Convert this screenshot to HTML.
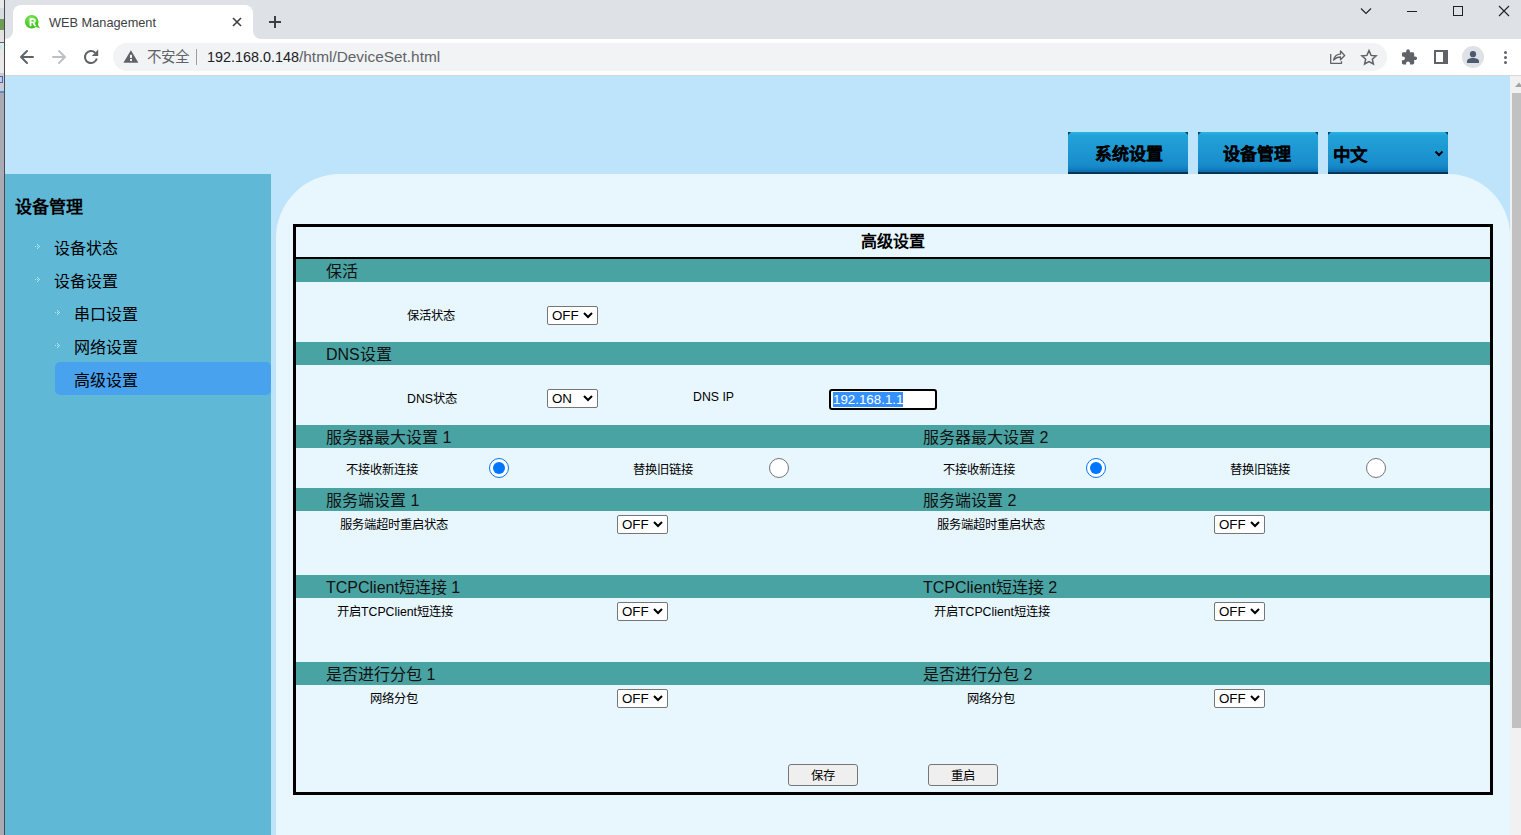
<!DOCTYPE html>
<html lang="zh-CN">
<head>
<meta charset="utf-8">
<style>
*{margin:0;padding:0;box-sizing:border-box;}
html,body{width:1521px;height:835px;overflow:hidden;background:#fff;}
body{position:relative;font-family:"Liberation Sans",sans-serif;color:#000;}
.a{position:absolute;}
.t{position:absolute;white-space:nowrap;line-height:1;}
/* browser chrome */
#tabbar{left:5px;top:0;width:1516px;height:39px;background:#dee1e6;}
#tab{left:13px;top:5px;width:240px;height:34px;background:#fff;border-radius:8px 8px 0 0;}
#toolbar{left:5px;top:39px;width:1516px;height:36px;background:#fff;}
#tbline{left:5px;top:75px;width:1516px;height:1px;background:#d8d7d7;}
#omni{left:113px;top:43px;width:1274px;height:28px;background:#f1f3f4;border-radius:14px;}
/* page */
#page{left:5px;top:76px;width:1505px;height:759px;background:#bde4fb;}
#side{left:5px;top:174px;width:266px;height:661px;background:#60b8d7;}
#panel{left:276px;top:174px;width:1234px;height:661px;background:#e8f7fe;border-radius:64px 62px 0 0;}
.navbtn{position:absolute;top:132px;width:120px;height:42px;border-radius:0;
 background:linear-gradient(#28b6e1 0px,#22a3d8 3px,#1d96d1 20px,#188ccb 33px,#1383c4 36px,#0c6eb3 39.5px,#093d62 40px,#073556 41px,#06304f 42px);
 font-weight:bold;font-size:17px;-webkit-text-stroke:0.15px #000;}
.navbtn::before,.navbtn::after{content:"";position:absolute;top:0;width:0;height:0;border-top:3px solid #0b3c5e;}
.navbtn::before{left:0;border-right:3px solid transparent;}
.navbtn::after{right:0;border-left:3px solid transparent;}
.sel{position:absolute;width:51px;height:19px;background:#fff;border:1px solid #767676;border-radius:2px;font-size:13.33px;}
.sel span{position:absolute;left:4px;top:2px;line-height:1;}
.sel svg{position:absolute;left:35px;top:5px;}
.hdr{position:absolute;left:296px;width:1194px;height:23px;background:#4aa3a3;}
.ht{position:absolute;margin-top:2px;font-size:16px;line-height:1;white-space:nowrap;color:#111;}
.lbl{position:absolute;margin-top:2px;font-size:12.3px;line-height:1;white-space:nowrap;}
.radio{position:absolute;width:20px;height:20px;border-radius:50%;}
.radio.on{border:1.3px solid #0075ff;background:#fff;}
.radio.on::after{content:"";position:absolute;left:2.7px;top:2.7px;width:12px;height:12px;border-radius:50%;background:#0075ff;}
.radio.off{border:1px solid #767676;background:#fff;}
.btn{position:absolute;top:764px;width:70px;height:22px;background:#efefef;border:1px solid #767676;border-radius:3px;font-size:12.3px;text-align:center;}
.btn span{position:relative;top:4px;line-height:1;}
.nav{position:absolute;margin-top:2px;font-size:16px;line-height:1;white-space:nowrap;}
.bul{position:absolute;}
</style>
</head>
<body>
<!-- left other window strip -->
<div class="a" style="left:0;top:0;width:4px;height:835px;background:#a9aab4"></div>
<div class="a" style="left:0;top:0;width:4px;height:8px;background:#e9e9ea"></div>
<div class="a" style="left:0;top:8px;width:4px;height:11px;background:#d6dce3"></div>
<div class="a" style="left:0;top:19px;width:4px;height:11px;background:#6f9b52"></div>
<div class="a" style="left:0;top:30px;width:4px;height:12px;background:#e3e3e3"></div>
<div class="a" style="left:0;top:42px;width:4px;height:1px;background:#606060"></div>
<div class="a" style="left:0;top:43px;width:4px;height:30px;background:#e8e8e8"></div>
<div class="a" style="left:0;top:45px;width:2px;height:4px;background:#b8eef0"></div>
<div class="a" style="left:0;top:73px;width:4px;height:19px;background:#c8ccd8"></div>
<div class="a" style="left:0;top:76px;width:3px;height:7px;border:1px solid #4a66b0;border-left:none"></div>
<div class="a" style="left:0;top:91px;width:4px;height:2px;background:#5b8ed0"></div>
<div class="a" style="left:4px;top:0;width:1px;height:835px;background:#4a4a4a"></div>
<div id="tabbar" class="a"></div>
<div id="tab" class="a"></div>
<div id="toolbar" class="a"></div>
<div id="tbline" class="a"></div>
<div id="omni" class="a"></div>


<!-- tab flares -->
<div class="a" style="left:5px;top:31px;width:8px;height:8px;background:#fff"></div>
<div class="a" style="left:5px;top:31px;width:8px;height:8px;background:#dee1e6;border-bottom-right-radius:8px"></div>
<div class="a" style="left:253px;top:31px;width:8px;height:8px;background:#fff"></div>
<div class="a" style="left:253px;top:31px;width:8px;height:8px;background:#dee1e6;border-bottom-left-radius:8px"></div>
<!-- favicon -->
<svg class="a" style="left:0;top:0" width="45" height="35" viewBox="0 0 45 35">
 <defs><radialGradient id="fg" cx="0.45" cy="0.3" r="0.75"><stop offset="0" stop-color="#8ee86a"/><stop offset="0.6" stop-color="#4fd02a"/><stop offset="1" stop-color="#38b818"/></radialGradient></defs>
 <circle cx="31.7" cy="21.8" r="6.8" fill="url(#fg)"/>
 <path d="M34.5 26.5L40 28.3L37.5 24Z" fill="#45c822"/>
 <path fill-rule="evenodd" fill="#fff" d="M29.6 18.3H33C35 18.3 35.9 19.3 35.9 20.6C35.9 21.7 35.2 22.4 34.3 22.7L36.3 26.3H34.3L32.6 23H31.4V26.3H29.6ZM31.4 19.7V21.7H32.9C33.6 21.7 34.1 21.4 34.1 20.7C34.1 20 33.6 19.7 32.9 19.7Z"/>
</svg>
<div class="t" style="left:49px;top:17px;font-size:12.75px;color:#3c4043">WEB Management</div>
<svg class="a" style="left:232px;top:17px" width="10" height="10" viewBox="0 0 10 10"><path d="M1 1L9 9M9 1L1 9" stroke="#3c4043" stroke-width="1.6"/></svg>
<svg class="a" style="left:268px;top:15px" width="14" height="14" viewBox="0 0 14 14"><path d="M7 1V13M1 7H13" stroke="#3c4043" stroke-width="2"/></svg>
<!-- window controls -->
<svg class="a" style="left:1360px;top:6px" width="12" height="10" viewBox="0 0 12 10"><path d="M1 2.5L6 7.5L11 2.5" fill="none" stroke="#202124" stroke-width="1.1"/></svg>
<div class="a" style="left:1407px;top:11px;width:10px;height:1px;background:#202124"></div>
<div class="a" style="left:1453px;top:6px;width:10px;height:10px;border:1px solid #202124"></div>
<svg class="a" style="left:1498px;top:5px" width="12" height="12" viewBox="0 0 12 12"><path d="M1 1L11 11M11 1L1 11" stroke="#202124" stroke-width="1.1"/></svg>
<!-- toolbar icons -->
<svg class="a" style="left:0;top:0" width="1521" height="76" viewBox="0 0 1521 76">
 <g fill="none" stroke-width="2" stroke-linecap="round" stroke-linejoin="round">
  <path d="M21 57H33M27 51L21 57L27 63" stroke="#5f6368"/>
  <path d="M53 57H65M59 51L65 57L59 63" stroke="#bdc1c6"/>
  <path d="M96.8 58.5A6 6 0 1 1 95.2 52.8" stroke="#5f6368" stroke-linecap="butt"/>
 </g>
 <path d="M91.8 55.9H98.2V49.5Z" fill="#5f6368"/>
 <path d="M130.9 50.2L138.4 62.8H123.4Z" fill="#5f6368"/>
 <rect x="130" y="54.8" width="2" height="3.2" fill="#f1f3f4"/>
 <rect x="130" y="59" width="2" height="2" fill="#f1f3f4"/>
 <!-- share -->
 <g fill="none" stroke="#5f6368" stroke-width="1.3" stroke-linejoin="round">
  <path d="M1330.7 54V63.3H1341.5V61.3"/>
  <path d="M1333.6 60C1334.5 56.5 1337 54.2 1340.5 54.2V51L1344.7 55.5L1340.5 59.8V57C1337.5 56.8 1335.5 58 1333.6 60Z"/>
 </g>
 <!-- star -->
 <path d="M1369 50.6L1371.1 55.4L1376.1 55.9L1372.3 59.2L1373.4 64L1369 61.5L1364.6 64L1365.7 59.2L1361.9 55.9L1366.9 55.4Z" fill="none" stroke="#5f6368" stroke-width="1.5" stroke-linejoin="miter"/>
 <!-- puzzle -->
 <g transform="translate(1400.5 48.6) scale(0.72)"><path d="M20.5 11H19V7c0-1.1-.9-2-2-2h-4V3.5C13 2.12 11.88 1 10.5 1S8 2.12 8 3.5V5H4c-1.1 0-1.99.9-1.99 2v3.8H3.5c1.49 0 2.7 1.21 2.7 2.7s-1.21 2.7-2.7 2.7H2V20c0 1.1.9 2 2 2h3.8v-1.5c0-1.49 1.21-2.7 2.7-2.7 1.49 0 2.7 1.21 2.7 2.7V22H17c1.1 0 2-.9 2-2v-4h1.5c1.38 0 2.5-1.12 2.5-2.5S21.88 11 20.5 11z" fill="#5f6368"/></g>
 <!-- side panel -->
 <rect x="1435" y="51" width="12" height="12" fill="none" stroke="#5f6368" stroke-width="2"/>
 <rect x="1443" y="50" width="5" height="14" fill="#5f6368"/>
 <!-- profile -->
 <circle cx="1473" cy="57" r="11" fill="#dee1e6"/>
 <circle cx="1473" cy="54.2" r="3.1" fill="#4e5a70"/>
 <path d="M1467 63V61.2C1467 59.2 1470 58 1473 58S1479 59.2 1479 61.2V63Z" fill="#4e5a70"/>
 <circle cx="1505.5" cy="52.4" r="1.5" fill="#5f6368"/>
 <circle cx="1505.5" cy="57.5" r="1.5" fill="#5f6368"/>
 <circle cx="1505.5" cy="62.5" r="1.5" fill="#5f6368"/>
</svg>
<div class="t" style="left:146.5px;top:50px;font-size:14.5px;color:#5f6368">不安全</div>
<div class="a" style="left:196px;top:49px;width:1px;height:16px;background:#9aa0a6"></div>
<div class="t" style="left:207px;top:49px;font-size:14.4px;color:#202124">192.168.0.148<span style="color:#5f6368;font-size:15.4px;position:relative;top:0">/html/DeviceSet.html</span></div>
<div id="page" class="a"></div>
<div id="side" class="a"></div>
<div id="panel" class="a"></div>


<!-- nav buttons -->
<div class="navbtn" style="left:1068px"><span class="t" style="left:27px;top:14px">系统设置</span></div>
<div class="navbtn" style="left:1198px"><span class="t" style="left:25px;top:14px">设备管理</span></div>
<div class="navbtn" style="left:1328px"><span class="t" style="left:4.5px;top:14.5px;font-size:17.5px">中文</span>
<svg class="a" style="left:106px;top:18px" width="10" height="7" viewBox="0 0 10 7"><path d="M1.5 1.5 L5 5 L8.5 1.5" fill="none" stroke="#000" stroke-width="2"/></svg></div>

<!-- sidebar -->
<div class="t" style="left:15px;top:199px;font-size:17px;font-weight:bold">设备管理</div>
<div id="navsel" class="a" style="left:55px;top:362px;width:216px;height:33px;background:#48a2ee;border-radius:5px"></div>
<div class="nav" style="left:54px;top:239px">设备状态</div>
<div class="nav" style="left:54px;top:272px">设备设置</div>
<div class="nav" style="left:74px;top:305px">串口设置</div>
<div class="nav" style="left:74px;top:338px">网络设置</div>
<div class="nav" style="left:74px;top:371px">高级设置</div>

<svg class="a" style="left:35px;top:244px" width="5" height="5" fill="#aee6f4"><rect x="0" y="2" width="1" height="1"/><rect x="2" y="0" width="1" height="1"/><rect x="2" y="2" width="1" height="1"/><rect x="3" y="1" width="1" height="1"/><rect x="4" y="2" width="1" height="1"/><rect x="3" y="3" width="1" height="1"/><rect x="2" y="4" width="1" height="1"/></svg>
<svg class="a" style="left:35px;top:277px" width="5" height="5" fill="#aee6f4"><rect x="0" y="2" width="1" height="1"/><rect x="2" y="0" width="1" height="1"/><rect x="2" y="2" width="1" height="1"/><rect x="3" y="1" width="1" height="1"/><rect x="4" y="2" width="1" height="1"/><rect x="3" y="3" width="1" height="1"/><rect x="2" y="4" width="1" height="1"/></svg>
<svg class="a" style="left:55px;top:310px" width="5" height="5" fill="#aee6f4"><rect x="0" y="2" width="1" height="1"/><rect x="2" y="0" width="1" height="1"/><rect x="2" y="2" width="1" height="1"/><rect x="3" y="1" width="1" height="1"/><rect x="4" y="2" width="1" height="1"/><rect x="3" y="3" width="1" height="1"/><rect x="2" y="4" width="1" height="1"/></svg>
<svg class="a" style="left:55px;top:343px" width="5" height="5" fill="#aee6f4"><rect x="0" y="2" width="1" height="1"/><rect x="2" y="0" width="1" height="1"/><rect x="2" y="2" width="1" height="1"/><rect x="3" y="1" width="1" height="1"/><rect x="4" y="2" width="1" height="1"/><rect x="3" y="3" width="1" height="1"/><rect x="2" y="4" width="1" height="1"/></svg>
<!-- table -->
<div class="a" style="left:293px;top:224px;width:1200px;height:571px;border:3px solid #000"></div>
<div class="a" style="left:296px;top:257px;width:1194px;height:2px;background:#000"></div>
<div class="t" style="left:861px;top:234px;font-size:16px;font-weight:bold">高级设置</div>

<div class="hdr" style="top:259px"></div>
<div class="hdr" style="top:342px"></div>
<div class="hdr" style="top:425px"></div>
<div class="hdr" style="top:488px"></div>
<div class="hdr" style="top:575px"></div>
<div class="hdr" style="top:662px"></div>

<div class="ht" style="left:326px;top:262px">保活</div>
<div class="ht" style="left:326px;top:345px">DNS设置</div>
<div class="ht" style="left:326px;top:428px">服务器最大设置 1</div>
<div class="ht" style="left:923px;top:428px">服务器最大设置 2</div>
<div class="ht" style="left:326px;top:491px">服务端设置 1</div>
<div class="ht" style="left:923px;top:491px">服务端设置 2</div>
<div class="ht" style="left:326px;top:578px">TCPClient短连接 1</div>
<div class="ht" style="left:923px;top:578px">TCPClient短连接 2</div>
<div class="ht" style="left:326px;top:665px">是否进行分包 1</div>
<div class="ht" style="left:923px;top:665px">是否进行分包 2</div>

<div class="lbl" style="left:407px;top:308px">保活状态</div>
<div class="lbl" style="left:407px;top:391px">DNS状态</div>
<div class="lbl" style="left:693px;top:389px">DNS IP</div>
<div class="lbl" style="left:346px;top:462px">不接收新连接</div>
<div class="lbl" style="left:633px;top:462px">替换旧链接</div>
<div class="lbl" style="left:943px;top:462px">不接收新连接</div>
<div class="lbl" style="left:1230px;top:462px">替换旧链接</div>
<div class="lbl" style="left:340px;top:517px">服务端超时重启状态</div>
<div class="lbl" style="left:937px;top:517px">服务端超时重启状态</div>
<div class="lbl" style="left:337px;top:604px">开启TCPClient短连接</div>
<div class="lbl" style="left:934px;top:604px">开启TCPClient短连接</div>
<div class="lbl" style="left:370px;top:691px">网络分包</div>
<div class="lbl" style="left:967px;top:691px">网络分包</div>

<div class="sel" style="left:547px;top:306px"><span>OFF</span><svg width="10" height="7" viewBox="0 0 10 7"><path d="M1 1 L5 5 L9 1" fill="none" stroke="#000" stroke-width="2"/></svg></div>
<div class="sel" style="left:547px;top:389px"><span>ON</span><svg width="10" height="7" viewBox="0 0 10 7"><path d="M1 1 L5 5 L9 1" fill="none" stroke="#000" stroke-width="2"/></svg></div>
<div class="sel" style="left:617px;top:515px"><span>OFF</span><svg width="10" height="7" viewBox="0 0 10 7"><path d="M1 1 L5 5 L9 1" fill="none" stroke="#000" stroke-width="2"/></svg></div>
<div class="sel" style="left:1214px;top:515px"><span>OFF</span><svg width="10" height="7" viewBox="0 0 10 7"><path d="M1 1 L5 5 L9 1" fill="none" stroke="#000" stroke-width="2"/></svg></div>
<div class="sel" style="left:617px;top:602px"><span>OFF</span><svg width="10" height="7" viewBox="0 0 10 7"><path d="M1 1 L5 5 L9 1" fill="none" stroke="#000" stroke-width="2"/></svg></div>
<div class="sel" style="left:1214px;top:602px"><span>OFF</span><svg width="10" height="7" viewBox="0 0 10 7"><path d="M1 1 L5 5 L9 1" fill="none" stroke="#000" stroke-width="2"/></svg></div>
<div class="sel" style="left:617px;top:689px"><span>OFF</span><svg width="10" height="7" viewBox="0 0 10 7"><path d="M1 1 L5 5 L9 1" fill="none" stroke="#000" stroke-width="2"/></svg></div>
<div class="sel" style="left:1214px;top:689px"><span>OFF</span><svg width="10" height="7" viewBox="0 0 10 7"><path d="M1 1 L5 5 L9 1" fill="none" stroke="#000" stroke-width="2"/></svg></div>


<div class="radio on" style="left:489px;top:458px"></div>
<div class="radio off" style="left:769px;top:458px"></div>
<div class="radio on" style="left:1086px;top:458px"></div>
<div class="radio off" style="left:1366px;top:458px"></div>

<!-- DNS input -->
<div class="a" style="left:829px;top:389px;width:108px;height:21px;background:#fff;border:2px solid #000;border-radius:3px"></div>
<div class="a" style="left:833px;top:392px;width:70px;height:15px;background:#3390ff"></div>
<div class="t" style="left:833px;top:393px;font-size:13.33px;color:#fff">192.168.1.1</div>

<div class="btn" style="left:788px"><span>保存</span></div>
<div class="btn" style="left:928px"><span>重启</span></div>

<!-- scrollbar -->
<div class="a" style="left:1510px;top:76px;width:11px;height:759px;background:#f1f1f1"></div>
<div class="a" style="left:1512px;top:93px;width:9px;height:635px;background:#c1c1c1"></div>
<svg class="a" style="left:1510px;top:80px" width="11" height="10"><path d="M9 2.5 L13 7 L5 7Z" fill="#a3a3a3"/></svg>

</body>
</html>
